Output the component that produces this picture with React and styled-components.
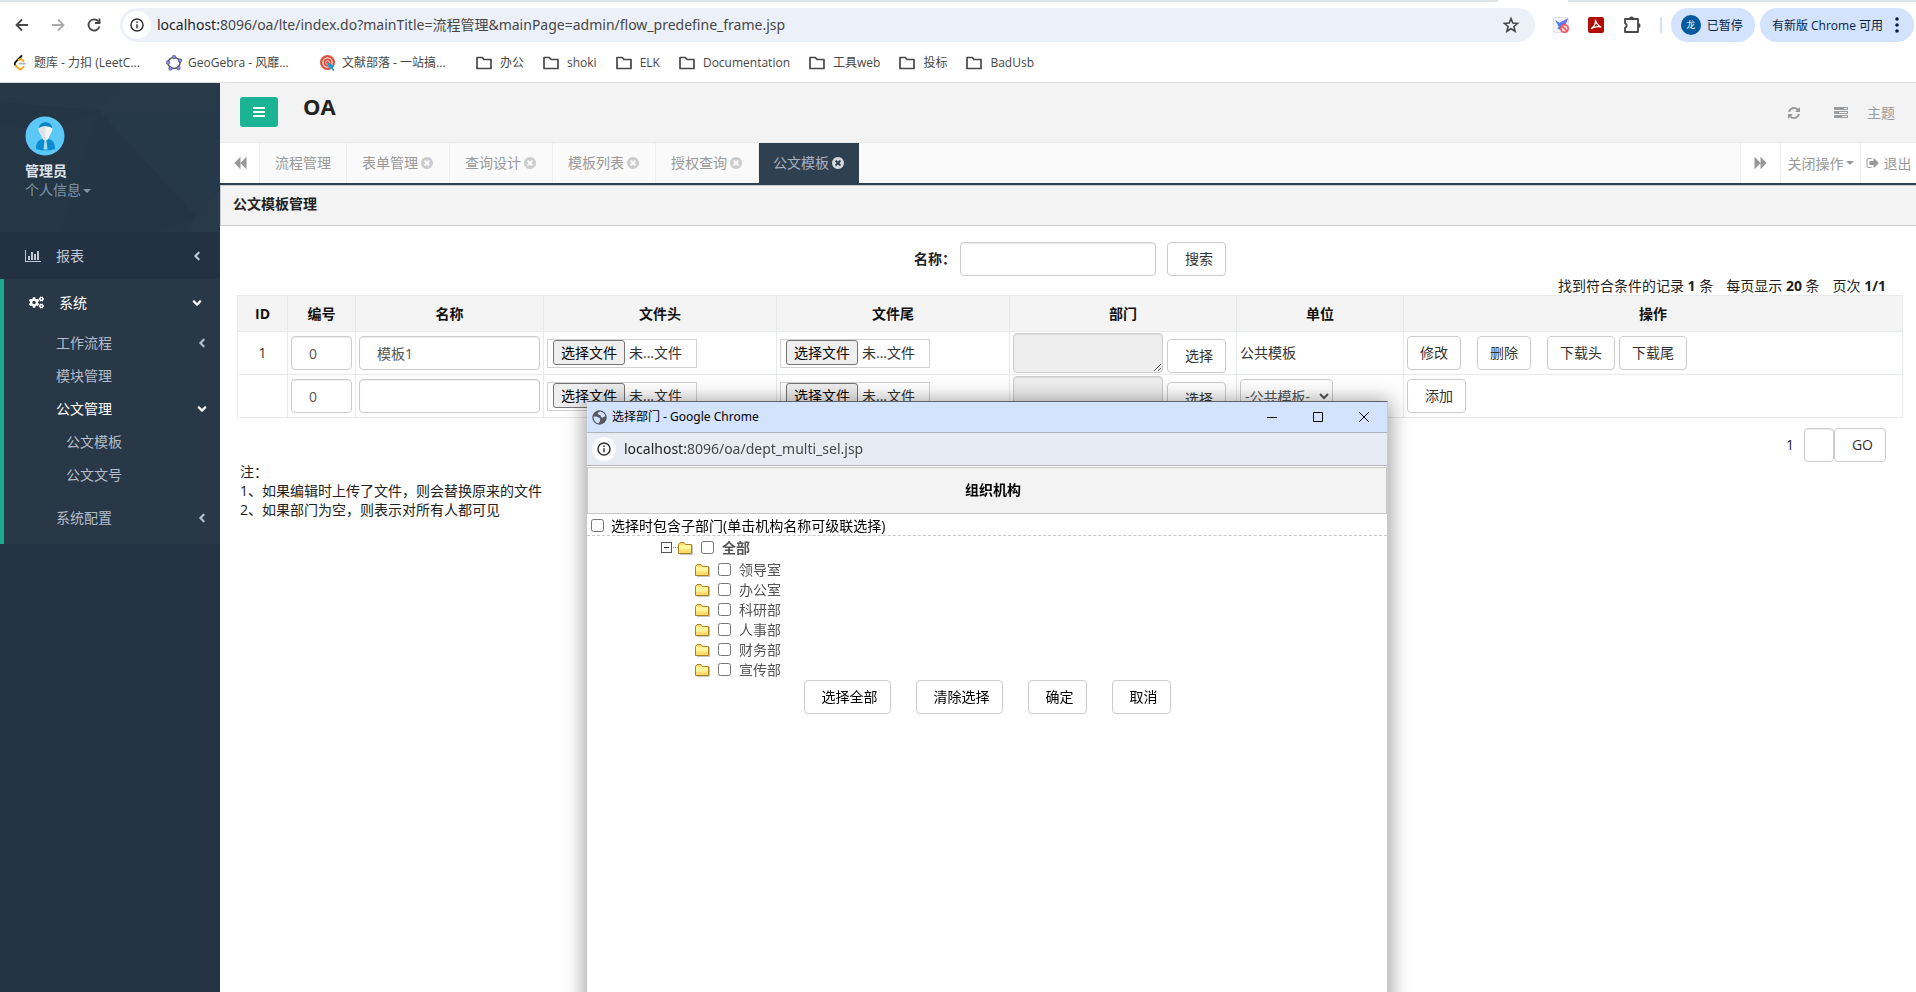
import React, { useState } from 'react'
import styled, { createGlobalStyle, css } from 'styled-components'
import { FaCogs, FaAngleLeft, FaAngleDown } from 'react-icons/fa'

const GlobalStyle = createGlobalStyle`
  * {
    box-sizing: border-box;
  }

  body {
    margin: 0;
    overflow: hidden;
    background: #fff;
    color: #222;
    font-family: 'Open Sans', 'Noto Sans CJK SC', sans-serif;
    font-size: 14px;
    line-height: 20px;
  }

  button, input, select, textarea {
    font-family: inherit;
    font-size: 14px;
  }

  a {
    color: inherit;
    text-decoration: none;
  }

  svg {
    display: block;
    flex: none;
  }
`

const Page = styled.div`
  display: flex;
  flex-direction: column;
  height: 100vh;
`

/* ---------- browser bars ---------- */

const TabStrip = styled.div`
  display: flex;
  justify-content: flex-end;
  height: 2px;
  padding-right: 348px;
  background: #dee3e8;
`

const CurrentTab = styled.div`
  width: 70px;
  background: #fff;
`

const Toolbar = styled.div`
  display: flex;
  align-items: center;
  height: 46px;
  padding: 0 2px 0 12px;
  color: #474747;
`

const NavButton = styled.button`
  display: flex;
  align-items: center;
  justify-content: center;
  width: 20px;
  height: 20px;
  margin-right: 16px;
  padding: 0;
  border: 0;
  background: none;
  color: ${p => p.disabled ? '#ababab' : '#474747'};
`

const Omnibox = styled.div`
  display: flex;
  flex: 1;
  align-items: center;
  height: 34px;
  padding: 0 15px 0 3px;
  border-radius: 17px;
  background: #ecf0f9;
`

const InfoBadge = styled.span`
  display: flex;
  flex: none;
  align-items: center;
  justify-content: center;
  width: ${p => p.size};
  height: ${p => p.size};
  border-radius: 50%;
  background: #fff;
  color: #333;
`

const Url = styled.div`
  flex: 1;
  padding-left: ${p => p.pad || '8px'};
  color: #474747;
  font-family: 'Noto Sans', 'Noto Sans CJK SC', sans-serif;

  b {
    color: #1f1f1f;
    font-weight: 400;
  }
`

const Extensions = styled.div`
  display: flex;
  align-items: center;
  gap: 18px;
  padding: 0 9px 0 18px;
`

const Divider = styled.span`
  width: 2px;
  height: 16px;
  background: #d3e3fd;
`

const Pill = styled.button`
  display: flex;
  align-items: center;
  height: 34px;
  margin-left: ${p => p.gap || '0'};
  padding: ${p => p.pad};
  border: 0;
  border-radius: 17px;
  background: #d3e3fd;
  color: #041e49;
  font-size: 12px;

  > svg {
    margin-left: 12px;
  }
`

const UserDot = styled.span`
  width: 20px;
  height: 20px;
  margin-right: 6px;
  border-radius: 50%;
  background: #00599c;
  color: #fff;
  font-size: 9px;
  line-height: 20px;
  text-align: center;
`

const Bookmarks = styled.nav`
  display: flex;
  align-items: center;
  gap: 17px;
  height: 35px;
  padding: 0 12px 5px;
  border-bottom: 1px solid #dcdcdc;
  color: #474747;
  font-size: 12px;
`

const Bookmark = styled.a`
  display: flex;
  align-items: center;
  gap: 6px;
  width: ${p => p.$site ? '137px' : 'auto'};
  white-space: nowrap;
`

/* ---------- sidebar ---------- */

const Body = styled.div`
  display: flex;
  flex: 1;
  min-height: 0;
`

const Sidebar = styled.aside`
  flex: none;
  width: 220px;
  background: #243444;
  color: #a7b1c2;
`

const Profile = styled.div`
  position: relative;
  height: 149px;
  padding: 33px 25px 0;
  background: #253747;
`

const ProfilePattern = styled.svg`
  position: absolute;
  inset: 0;
`

const ProfileInfo = styled.div`
  position: relative;
  color: #8095a8;
  line-height: 19px;

  strong {
    display: block;
    margin-top: 5px;
    color: #dfe4ed;
  }
`

const Caret = styled.i`
  display: inline-block;
  margin-left: 2px;
  border: 4px solid transparent;
  border-top-color: currentColor;
  border-bottom: 0;
  vertical-align: middle;
`

const MenuGroup = styled.div`
  padding-bottom: ${p => p.$open ? '10px' : '0'};
  border-left: ${p => p.$open ? '4px solid #19aa8d' : '0'};
  background: ${p => p.$open ? '#293846' : '#233242'};
`

const MenuHead = styled.a`
  display: flex;
  align-items: center;
  gap: 15px;
  height: 47px;
  padding: 0 16px 0 25px;
  color: ${p => p.$open ? '#fff' : '#c0c8d3'};

  span {
    flex: 1;
  }
`

const SubItem = styled.a`
  display: flex;
  align-items: center;
  justify-content: space-between;
  height: 33px;
  margin-top: ${p => p.$spaced ? '10px' : '0'};
  padding: 0 11px 0 ${p => p.$deep ? '62px' : '52px'};
  color: ${p => p.$open ? '#fff' : '#b4bcc9'};
`

/* ---------- main area ---------- */

const Main = styled.main`
  flex: 1;
  min-width: 0;
`

const Header = styled.header`
  display: flex;
  align-items: flex-start;
  height: 60px;
  padding: 14px 21px 0 20px;
  border-bottom: 1px solid #e7eaec;
  background: #f3f3f3;
  color: #999c9e;

  h1 {
    flex: 1;
    margin: 0 0 0 25px;
    color: #222;
    font-size: 22px;
    line-height: 18px;
  }
`

const MenuToggle = styled.button`
  display: flex;
  align-items: center;
  justify-content: center;
  width: 38px;
  height: 30px;
  border: 0;
  border-radius: 3px;
  background: #1ab394;
  color: #fff;
`

const HeaderTools = styled.div`
  display: flex;
  align-items: center;
  height: 32px;

  a {
    display: flex;
    align-items: center;
    gap: 19px;
    margin-left: 33px;
  }
`

const TabBar = styled.div`
  display: flex;
  height: 42px;
  border-bottom: 2px solid #2f4050;
  background: #fafafa;
  color: #999;
`

const TabControl = styled.button`
  display: flex;
  align-items: center;
  justify-content: center;
  gap: ${p => p.gap || '0'};
  width: ${p => p.width};
  padding: 0;
  border: 0;
  border-${p => p.side}: 1px solid #eee;
  background: #fff;
  color: #999;
  white-space: nowrap;
`

const Tabs = styled.div`
  display: flex;
  flex: 1;
`

const Tab = styled.a`
  display: flex;
  align-items: center;
  gap: 2px;
  padding: 0 15px;
  border-right: 1px solid #eee;
  color: #999;

  svg {
    color: #ccc;
  }

  ${p => p.$active && css`
    padding: 0 14px;
    border: 0;
    background: #2f4050;
    color: #a7b1c2;

    svg {
      color: #d5d8dc;
    }
  `}
`

const SectionTitle = styled.h2`
  height: 41px;
  margin: 0;
  padding: 0 12px;
  border: 1px solid #ccc;
  border-right: 0;
  background: #f3f3f3;
  font-size: 14px;
  line-height: 36px;
`

const field = css`
  height: 34px;
  border: 1px solid #ccc;
  border-radius: 4px;
  background: #fff;
  color: #555;
`

const TextInput = styled.input`
  ${field}
  display: block;
  width: ${p => p.width || '100%'};
  padding: 0 0 0 17px;
  box-shadow: inset 0 1px 1px rgba(0, 0, 0, 0.08);
`

const Button = styled.button`
  ${field}
  padding: 0 12px 0 ${p => p.$even ? '12px' : '17px'};
  color: #333;
  line-height: 20px;
  white-space: nowrap;
`

const SearchForm = styled.form`
  display: flex;
  align-items: center;
  justify-content: center;
  gap: 11px;
  padding: 16px 0 0 4px;

  label {
    display: flex;
    align-items: center;
    gap: 4px;
    font-weight: 700;
  }
`

const Summary = styled.div`
  display: flex;
  justify-content: flex-end;
  gap: 13px;
  padding-right: 30px;
  line-height: 19px;
`

const Table = styled.table`
  width: calc(100% - 30px);
  margin: 0 13px 0 17px;
  border-collapse: collapse;
  table-layout: fixed;

  th, td {
    border: 1px solid #e7eaec;
  }

  th {
    height: 36px;
    padding: 0;
    background: #f4f4f4;
    color: #111;
  }

  td {
    height: 43px;
    padding: 1px 3px;
    color: #333;
  }
`

const IdCell = styled.td`
  text-align: center;
`

const FileLabel = styled.label`
  position: relative;
  display: flex;
  align-items: center;
  gap: 4px;
  width: 150px;
  height: 29px;
  padding-left: 5px;
  border: 1px solid #d2d2d2;

  span {
    height: 25px;
    margin-bottom: 2px;
    padding: 0 7px;
    border: 1px solid #767676;
    border-radius: 3px;
    background: #efefef;
    color: #000;
    line-height: 23px;
  }

  input {
    position: absolute;
    inset: 0;
    width: 100%;
    opacity: 0;
  }
`

const DeptPicker = styled.div`
  display: flex;
  align-items: flex-end;
  gap: 4px;
`

const DeptText = styled.textarea`
  display: block;
  width: 150px;
  height: 40px;
  border: 1px solid #ccc;
  border-radius: 4px;
  background: #eee;
  box-shadow: inset 0 1px 1px rgba(0, 0, 0, 0.08);
`

const Select = styled.select`
  ${field}
  width: 93px;
`

const Actions = styled.div`
  display: flex;
  gap: 4px;
`

const Spacer = styled.i`
  width: 8px;
`

const Pager = styled.div`
  display: flex;
  align-items: center;
  justify-content: flex-end;
  padding: 10px 30px 0 0;

  span {
    margin-right: 10px;
  }
`

const Notes = styled.div`
  padding-left: 20px;
  line-height: 19px;
`

/* ---------- popup window ---------- */

const Popup = styled.section`
  position: fixed;
  top: 401px;
  bottom: -20px;
  left: 587px;
  width: 801px;
  border-top: 1px solid #5f6368;
  border-right: 1px solid #ccc;
  background: #fff;
  box-shadow: 0 2px 20px 2px rgba(0, 0, 0, 0.4);
  color: #000;
`

const PopupTitle = styled.div`
  display: flex;
  align-items: center;
  gap: 5px;
  height: 31px;
  padding-left: 5px;
  border-bottom: 1px solid #b0b3b9;
  background: #d3e2fd;
  font-family: 'Noto Sans', 'Noto Sans CJK SC', sans-serif;
  font-size: 12px;

  span {
    flex: 1;
  }
`

const WindowButtons = styled.div`
  display: flex;
`

const WindowButton = styled.button`
  display: flex;
  align-items: center;
  justify-content: center;
  width: 46px;
  height: 30px;
  padding: 0;
  border: 0;
  background: none;
`

const PopupAddress = styled.div`
  display: flex;
  align-items: center;
  height: 33px;
  padding-left: 5px;
  border-bottom: 1px solid #b0b0b5;
  background: #e7ebf4;
`

const PopupHeading = styled.h3`
  height: 47px;
  margin: 1px 0 0;
  padding-left: 12px;
  border: 1px solid #c8c8c8;
  background: #f3f3f3;
  font-size: 14px;
  line-height: 43px;
  text-align: center;
`

const Checkbox = styled.input`
  width: 13px;
  height: 13px;
  margin: 0;
`

const IncludeRow = styled.label`
  display: flex;
  align-items: center;
  gap: 7px;
  height: 22px;
  padding: 3px 0 0 4px;
  border-bottom: 1px dashed #c8c8c8;

  input {
    margin-bottom: 2px;
  }
`

const TreeRow = styled.label`
  display: flex;
  align-items: center;
  gap: 8px;
  height: ${p => p.$root ? '24px' : '20px'};
  padding-left: ${p => p.$root ? '74px' : '108px'};
  color: #555;
  font-weight: ${p => p.$root ? '700' : '400'};

  input {
    margin-bottom: 2px;
  }
`

const PopupButtons = styled.div`
  display: flex;
  justify-content: center;
  gap: 25px;

  button {
    color: #000;
  }
`

/* ---------- icons ---------- */

const Glyph = ({ d, size = 14, box = '0 0 1792 1792', flip }) => (
  <svg width={size} height={size} viewBox={box} fill="currentColor">
    <path d={d} transform={flip ? 'translate(1792 0) scale(-1 1)' : undefined} />
  </svg>
)

const BACKWARD = 'M1683 141q19-19 32-13t13 32v1472q0 26-13 32t-32-13l-710-710q-9-9-13-19v710q0 26-13 32t-32-13l-710-710q-19-19-19-45t19-45l710-710q19-19 32-13t13 32v710q4-10 13-19z'
const CLOSE = 'M1277 1122q0-26-19-45l-181-181 181-181q19-19 19-45 0-27-19-46l-90-90q-19-19-46-19-26 0-45 19l-181 181-181-181q-19-19-45-19-27 0-46 19l-90 90q-19 19-19 46 0 26 19 45l181 181-181 181q-19 19-19 45 0 27 19 46l90 90q19 19 46 19 26 0 45-19l181-181 181 181q19 19 45 19 27 0 46-19l90-90q19-19 19-46zm387-226q0 209-103 385.5t-279.5 279.5-385.5 103-385.5-103-279.5-279.5-103-385.5 103-385.5 279.5-279.5 385.5-103 385.5 103 279.5 279.5 103 385.5z'
const REFRESH = 'M1639 1056q0 5-1 7-64 268-268 434.5t-478 166.5q-146 0-282.5-55t-243.5-157l-129 129q-19 19-45 19t-45-19-19-45v-448q0-26 19-45t45-19h448q26 0 45 19t19 45-19 45l-137 137q71 66 161 102t187 36q134 0 250-65t186-179q11-17 53-117 8-23 30-23h192q13 0 22.5 9.5t9.5 22.5zm25-800v448q0 26-19 45t-45 19h-448q-26 0-45-19t-19-45 19-45l138-138q-148-137-349-137-134 0-250 65t-186 179q-11 17-53 117-8 23-30 23h-199q-13 0-22.5-9.5t-9.5-22.5v-7q65-268 270-434.5t480-166.5q146 0 284 55.5t245 156.5l130-129q19-19 45-19t45 19 19 45z'
const TASKS = 'M1024 1408h640v-128h-640v128zm-384-512h1024v-128h-1024v128zm640-512h384v-128h-384v128zm512 832v256q0 26-19 45t-45 19h-1664q-26 0-45-19t-19-45v-256q0-26 19-45t45-19h1664q26 0 45 19t19 45zm0-512v256q0 26-19 45t-45 19h-1664q-26 0-45-19t-19-45v-256q0-26 19-45t45-19h1664q26 0 45 19t19 45zm0-512v256q0 26-19 45t-45 19h-1664q-26 0-45-19t-19-45v-256q0-26 19-45t45-19h1664q26 0 45 19t19 45z'
const SIGN_OUT = 'M704 1440q0 4 1 20t.5 26.5-3 23.5-10 19.5-20.5 6.5h-320q-119 0-203.5-84.5t-84.5-203.5v-704q0-119 84.5-203.5t203.5-84.5h320q13 0 22.5 9.5t9.5 22.5q0 4 1 20t.5 26.5-3 23.5-10 19.5-20.5 6.5h-320q-66 0-113 47t-47 113v704q0 66 47 113t113 47h312l11.5 1 11.5 3 8 5.5 7 9 2 13.5zm928-544q0 26-19 45l-544 544q-19 19-45 19t-45-19-19-45v-288h-448q-26 0-45-19t-19-45v-384q0-26 19-45t45-19h448v-288q0-26 19-45t45-19 45 19l544 544q19 19 19 45z'
const CHART = 'M640 896v512h-256v-512h256zm384-512v1024h-256v-1024h256zm1024 1152v128h-2048v-1536h128v1408h1920zm-640-896v768h-256v-768h256zm384-384v1152h-256v-1152h256z'

const ArrowIcon = ({ right }) => (
  <svg width="16" height="16" viewBox="0 0 16 16" fill="none" stroke="currentColor" strokeWidth="1.8">
    <path d={right ? 'M2 8h11M8 2.5L13.500 8 8 13.500' : 'M14 8H3M8 2.500L2.500 8 8 13.500'} />
  </svg>
)

const ReloadIcon = () => (
  <svg width="16" height="16" viewBox="0 0 16 16" fill="none" stroke="currentColor" strokeWidth="1.8">
    <path d="M13.500 9.500A5.600 5.600 0 1 1 12.300 4.200L14 6" />
    <path d="M13.500 1.500V6H9" />
  </svg>
)

const InfoIcon = () => (
  <svg width="14" height="14" viewBox="0 0 14 14" fill="none" stroke="currentColor" strokeWidth="1.5">
    <circle cx="7" cy="7" r="6" />
    <path d="M7 6.2v4M7 3.5v1.5" />
  </svg>
)

const StarIcon = () => (
  <svg width="18" height="18" viewBox="0 0 18 18" fill="none" stroke="#474747" strokeWidth="1.6">
    <path d="M9 2.600l1.800 4.400 4.800.4-3.700 3.100 1.200 4.700L9 12.700l-4.100 2.500 1.200-4.700-3.700-3.100 4.800-.4z" />
  </svg>
)

const BirdIcon = () => (
  <svg width="16" height="16" viewBox="0 0 16 16">
    <rect x=".5" y=".5" width="15" height="15" rx="1.5" fill="#f2f4fa" stroke="#dfe3ee" />
    <path d="M2 3l5 3 1-1.500 2-.5 5-2.500-2 5-1 4-4 3-4-2.500 2-1z" fill="#4a80ee" />
    <path d="M10 4l5-2.500-3 6-4 2z" fill="#7a6cf0" />
    <circle cx="11.5" cy="11.500" r="3.700" fill="#fbd9dc" stroke="#f4505a" strokeWidth="1.600" />
    <path d="M9 9l5 5" stroke="#f4505a" strokeWidth="1.600" />
  </svg>
)

const PdfIcon = () => (
  <svg width="18" height="18" viewBox="0 0 18 18">
    <rect x="1" y="1" width="16" height="16" rx="2" fill="#b30b00" />
    <path d="M8.500 4.200q.9 4.300 5 6.800M8.500 4.200q.3 5-4 8.300M4.500 12.500q4-2.600 9.300-1.600" fill="none" stroke="#fff" strokeWidth="1.300" strokeLinecap="round" />
  </svg>
)

const PuzzleIcon = () => (
  <svg width="19" height="18" viewBox="0 0 19 18" fill="none" stroke="#474747" strokeWidth="1.8">
    <path d="M2 3h13v13H2V12q3.500-2.500 0-5z" strokeLinejoin="round" />
    <path d="M6 3a2.500 2.500 0 0 1 5 0zM15 7a2.400 2.400 0 0 1 0 5z" fill="#474747" stroke="none" />
  </svg>
)

const DotsIcon = () => (
  <svg width="4" height="16" viewBox="0 0 4 16" fill="currentColor">
    <circle cx="2" cy="2" r="1.8" />
    <circle cx="2" cy="8" r="1.8" />
    <circle cx="2" cy="14" r="1.8" />
  </svg>
)

const LeetIcon = () => (
  <svg width="16" height="16" viewBox="0 0 16 16" fill="none" strokeWidth="1.8" strokeLinecap="round">
    <path d="M9.500 1L3.500 7c-1 1.200-1 2.300 0 3.400" stroke="#111" />
    <path d="M3.500 10.400l2.800 3c1.100 1.100 2.600 1.100 3.700 0l1.500-1.500M6.500 5c1.200-1 2.700-1 3.700 0l1.300 1.200" stroke="#ffa116" />
    <path d="M7.500 8.700h5.500" stroke="#b3b3b3" />
  </svg>
)

const GeoIcon = () => (
  <svg width="16" height="16" viewBox="0 0 16 16">
    <ellipse cx="8" cy="8" rx="6" ry="5.500" fill="none" stroke="#555" strokeWidth="1.400" />
    {[[8, 2], [14, 5.5], [12.5, 13], [4.5, 13.5], [2, 7.5]].map(([x, y]) => (
      <circle key={x} cx={x} cy={y} r="1.8" fill="#8a8aff" stroke="#444" strokeWidth="0.6" />
    ))}
  </svg>
)

const TargetIcon = () => (
  <svg width="16" height="16" viewBox="0 0 16 16" fill="none">
    <circle cx="7.5" cy="7.5" r="7.5" fill="#d9503f" />
    <circle cx="7.5" cy="7.5" r="4.6" stroke="#f6d5cf" strokeWidth="1.4" />
    <circle cx="7.5" cy="7.5" r="1.800" stroke="#f6d5cf" />
    <path d="M7.500 7.500l7.500 3.500-2.500 1 2 3-1.500 1-2-3-2 1z" fill="#1ba0d8" />
  </svg>
)

const FolderOutline = () => (
  <svg width="20" height="16" viewBox="0 0 20 16" fill="none" stroke="#474747" strokeWidth="1.7">
    <path d="M3 3v10.500h14V4.500h-7L8.300 2.500H3z" strokeLinejoin="round" />
  </svg>
)

const AvatarIcon = () => (
  <svg width="40" height="40" viewBox="0 0 40 40">
    <circle cx="20" cy="20" r="19.5" fill="#5bc8f8" />
    <path d="M11 33c0-6 2-9 6.500-10l3 2 3-2c4.500 1 6.500 4 6.500 10q-9.500 3-19 0z" fill="#0b8cd0" />
    <path d="M14 13c-1-9 14-9 13 0-4-3-9-3-13 0z" fill="#0b86c4" />
    <path d="M13.500 12.500c4-3 10-3 14 0-.5 4-2 5-2.500 6.500-1 3-2.500 5-4.500 6-2-1-3.500-3-4.500-6-.5-1.500-2-2.500-2.500-6.500z" fill="#f4f4f4" />
    <path d="M13.500 12.500q3.500-2.200 7-2.200V25c-2-1-3.500-3-4.500-6-.5-1.500-2-2.500-2.500-6.500z" fill="#e2e2e2" />
    <path d="M19.500 25h2l1 8.500h-4z" fill="#a9dcf2" />
  </svg>
)

const GlobeIcon = () => (
  <svg width="15" height="15" viewBox="0 0 15 15">
    <circle cx="7.5" cy="7.5" r="7.200" fill="#55585c" />
    <path d="M1.500 7c2-1 4.500 0 6 1S8 11.500 6.500 13.500C3 12.500 1.500 10 1.500 7zM8 1.500c-2 1-3 2-1.500 3S9 5 9 6.500s2 1.500 2.500.5 1.500-.5 2-.5C13 4 11 2 8 1.500z" fill="#d3e2fd" />
  </svg>
)

const FolderIcon = () => (
  <svg width="15" height="14" viewBox="0 0 15 14">
    <path d="M2 13.500h12.500V4" fill="none" stroke="#c4c4c4" />
    <path d="M.5 12.500V3.500l1.500-2h4l1.500 2h6v9z" fill="#fbdc6c" stroke="#b0801e" />
    <path d="M1 4h12v4.500H1z" fill="#fff6a0" />
  </svg>
)

/* ---------- data ---------- */

const folders = ['办公', 'shoki', 'ELK', 'Documentation', '工具web', '投标', 'BadUsb']
const tabs = ['表单管理', '查询设计', '模板列表', '授权查询']
const columns = [
  ['ID', 50], ['编号', 68], ['名称', 188], ['文件头', 233],
  ['文件尾', 233], ['部门', 227], ['单位', 167], ['操作']
]
const depts = ['领导室', '办公室', '科研部', '人事部', '财务部', '宣传部']

const FilePicker = ({ label }) => (
  <FileLabel>
    <span>选择文件</span>
    未...文件
    <input type="file" aria-label={label} />
  </FileLabel>
)

function TemplateRow({ id, name, unit, children }) {
  return (
    <tr>
      <IdCell>{id}</IdCell>
      <td><TextInput defaultValue="0" aria-label="编号" /></td>
      <td><TextInput defaultValue={name} aria-label="名称" /></td>
      <td><FilePicker label="文件头" /></td>
      <td><FilePicker label="文件尾" /></td>
      <td>
        <DeptPicker>
          <DeptText readOnly aria-label="部门" />
          <Button type="button">选择</Button>
        </DeptPicker>
      </td>
      <td>{unit}</td>
      <td><Actions>{children}</Actions></td>
    </tr>
  )
}

function BrowserBars() {
  return (
    <>
      <TabStrip><CurrentTab /></TabStrip>
      <Toolbar>
        <NavButton aria-label="back"><ArrowIcon /></NavButton>
        <NavButton aria-label="forward" disabled><ArrowIcon right /></NavButton>
        <NavButton aria-label="reload"><ReloadIcon /></NavButton>
        <Omnibox>
          <InfoBadge size="28px"><InfoIcon /></InfoBadge>
          <Url pad="6px"><b>localhost:</b>8096/oa/lte/index.do?mainTitle=流程管理&amp;mainPage=admin/flow_predefine_frame.jsp</Url>
          <StarIcon />
        </Omnibox>
        <Extensions>
          <BirdIcon />
          <PdfIcon />
          <PuzzleIcon />
          <Divider />
        </Extensions>
        <Pill pad="0 12px 0 10px"><UserDot>龙</UserDot>已暂停</Pill>
        <Pill gap="5px" pad="0 15px 0 12px">有新版 Chrome 可用<DotsIcon /></Pill>
      </Toolbar>
      <Bookmarks>
        <Bookmark $site href="#"><LeetIcon />题库 - 力扣 (LeetC...</Bookmark>
        <Bookmark $site href="#"><GeoIcon />GeoGebra - 风靡...</Bookmark>
        <Bookmark $site href="#"><TargetIcon />文献部落 - 一站搞...</Bookmark>
        {folders.map(f => (
          <Bookmark key={f} href="#"><FolderOutline />{f}</Bookmark>
        ))}
      </Bookmarks>
    </>
  )
}

function SideMenu() {
  return (
    <Sidebar>
      <Profile>
        <ProfilePattern width="220" height="149" viewBox="0 0 220 149">
          <path d="M0 0h120L99 28 0 19z" fill="#273949" />
          <path d="M120 0h100v28L99 28z" fill="#283a4a" />
          <path d="M99 28h121v76l-24 30z" fill="#26394a" />
          <path d="M99 28l97 106-40 15H60z" fill="#243545" />
          <path d="M196 134l24-28v43h-30z" fill="#283a4a" />
          <path d="M0 19l99 9-55 20L0 40z" fill="#243545" />
        </ProfilePattern>
        <ProfileInfo>
          <AvatarIcon />
          <strong>管理员</strong>
          <a href="#">个人信息<Caret /></a>
        </ProfileInfo>
      </Profile>
      <MenuGroup>
        <MenuHead href="#"><Glyph d={CHART} size={16} box="0 0 2048 1792" /><span>报表</span><FaAngleLeft size={14} /></MenuHead>
      </MenuGroup>
      <MenuGroup $open>
        <MenuHead href="#" $open><FaCogs size={15} /><span>系统</span><FaAngleDown size={14} /></MenuHead>
        <SubItem href="#">工作流程<FaAngleLeft size={14} /></SubItem>
        <SubItem href="#">模块管理</SubItem>
        <SubItem href="#" $open>公文管理<FaAngleDown size={14} /></SubItem>
        <SubItem href="#" $deep>公文模板</SubItem>
        <SubItem href="#" $deep>公文文号</SubItem>
        <SubItem href="#" $spaced>系统配置<FaAngleLeft size={14} /></SubItem>
      </MenuGroup>
    </Sidebar>
  )
}

function DeptPopup() {
  const [cascade, setCascade] = useState(false)
  return (
    <Popup>
      <PopupTitle>
        <GlobeIcon />
        <span>选择部门 - Google Chrome</span>
        <WindowButtons>
          {['M0 5.5h10', 'M.5.5h9v9h-9z', 'M0 0l10 10M10 0L0 10'].map((d, i) => (
            <WindowButton key={d} aria-label={['minimize', 'maximize', 'close'][i]}>
              <svg width="10" height="10" viewBox="0 0 10 10" fill="none" stroke="#000"><path d={d} /></svg>
            </WindowButton>
          ))}
        </WindowButtons>
      </PopupTitle>
      <PopupAddress>
        <InfoBadge size="24px"><InfoIcon /></InfoBadge>
        <Url><b>localhost:</b>8096/oa/dept_multi_sel.jsp</Url>
      </PopupAddress>
      <PopupHeading>组织机构</PopupHeading>
      <IncludeRow>
        <Checkbox type="checkbox" checked={cascade} onChange={e => setCascade(e.target.checked)} />
        选择时包含子部门(单击机构名称可级联选择)
      </IncludeRow>
      <TreeRow $root>
        <svg width="32" height="14" viewBox="0 0 32 14" fill="none">
          <rect x=".5" y="1.5" width="10" height="10" fill="#fff" stroke="#555" />
          <path d="M3 6.5h5" stroke="#222" />
          <path d="M12 6.5h5" stroke="#888" strokeDasharray="1 1" />
          <g transform="translate(17 0)"><FolderIcon /></g>
        </svg>
        <Checkbox type="checkbox" />
        全部
      </TreeRow>
      {depts.map(d => (
        <TreeRow key={d}><FolderIcon /><Checkbox type="checkbox" />{d}</TreeRow>
      ))}
      <PopupButtons>
        <Button>选择全部</Button>
        <Button>清除选择</Button>
        <Button>确定</Button>
        <Button>取消</Button>
      </PopupButtons>
    </Popup>
  )
}

function App() {
  return (
    <Page>
      <GlobalStyle />
      <BrowserBars />
      <Body>
        <SideMenu />
        <Main>
          <Header>
            <MenuToggle aria-label="menu">
              <svg width="14" height="12" viewBox="0 0 14 12"><path d="M1 1h12v2H1zM1 5h12v2H1zM1 9h12v2H1z" fill="#fff" /></svg>
            </MenuToggle>
            <h1>OA</h1>
            <HeaderTools>
              <a href="#" aria-label="refresh"><Glyph d={REFRESH} /></a>
              <a href="#"><Glyph d={TASKS} />主题</a>
            </HeaderTools>
          </Header>
          <TabBar>
            <TabControl side="right" width="40px" aria-label="scroll left"><Glyph d={BACKWARD} /></TabControl>
            <Tabs>
              <Tab href="#">流程管理</Tab>
              {tabs.map(t => (
                <Tab key={t} href="#">{t}<Glyph d={CLOSE} /></Tab>
              ))}
              <Tab href="#" $active>公文模板<Glyph d={CLOSE} /></Tab>
            </Tabs>
            <TabControl side="left" width="40px" aria-label="scroll right"><Glyph d={BACKWARD} flip /></TabControl>
            <TabControl side="left" width="80px">关闭操作<Caret /></TabControl>
            <TabControl side="left" width="56px" gap="4px"><Glyph d={SIGN_OUT} />退出</TabControl>
          </TabBar>
          <SectionTitle>公文模板管理</SectionTitle>
          <SearchForm onSubmit={e => e.preventDefault()}>
            <label>
              名称：
              <TextInput width="196px" />
            </label>
            <Button>搜索</Button>
          </SearchForm>
          <Summary>
            <span>找到符合条件的记录 <b>1</b> 条</span>
            <span>每页显示 <b>20</b> 条</span>
            <span>页次 <b>1/1</b></span>
          </Summary>
          <Table>
            <colgroup>
              {columns.map(([c, w]) => <col key={c} width={w} />)}
            </colgroup>
            <thead>
              <tr>{columns.map(([c]) => <th key={c}>{c}</th>)}</tr>
            </thead>
            <tbody>
              <TemplateRow id="1" name="模板1" unit="公共模板">
                <Button $even>修改</Button>
                <Spacer />
                <Button $even>删除</Button>
                <Spacer />
                <Button $even>下载头</Button>
                <Button $even>下载尾</Button>
              </TemplateRow>
              <TemplateRow
                name=""
                unit={<Select aria-label="单位"><option>-公共模板-</option></Select>}
              >
                <Button>添加</Button>
              </TemplateRow>
            </tbody>
          </Table>
          <Pager>
            <span>1</span>
            <TextInput width="30px" aria-label="页码" />
            <Button>GO</Button>
          </Pager>
          <Notes>
            注：<br />
            1、如果编辑时上传了文件，则会替换原来的文件<br />
            2、如果部门为空，则表示对所有人都可见
          </Notes>
        </Main>
      </Body>
      <DeptPopup />
    </Page>
  )
}

export default App
